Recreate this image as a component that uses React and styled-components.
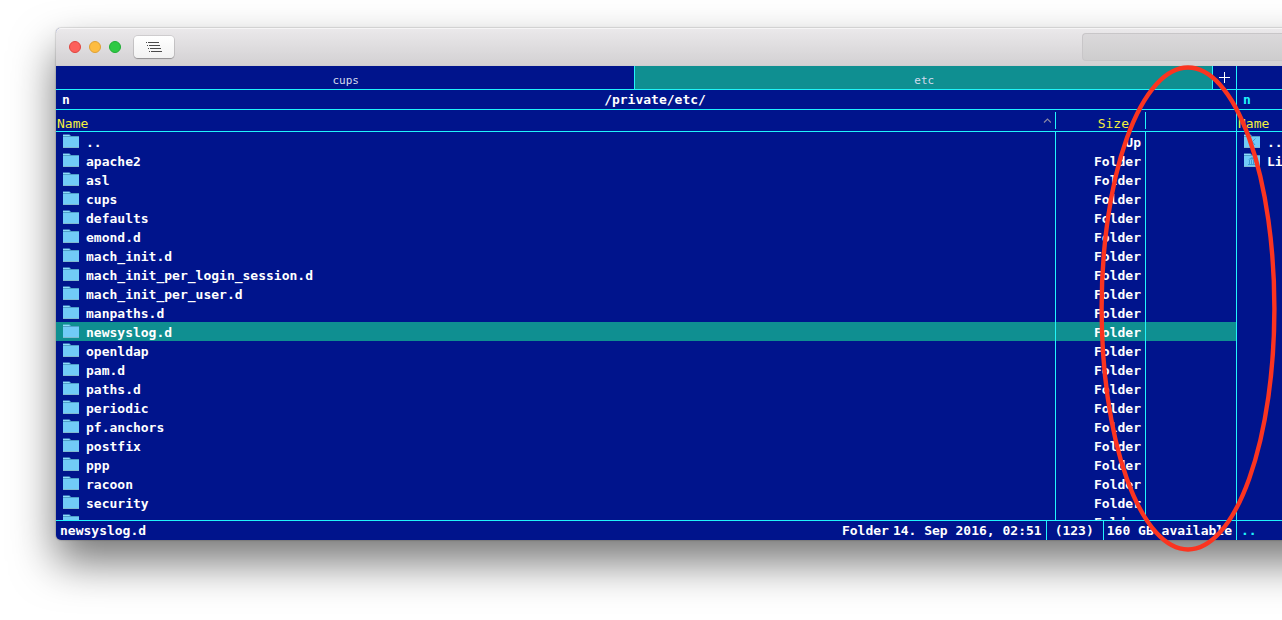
import React from "react";
import styled, { createGlobalStyle } from "styled-components";

const NAVY = "#00148c";
const CYAN = "#21f4fb";
const TEAL = "#0f8f91";
const YELLOW = "#f4f03c";

const GlobalStyle = createGlobalStyle`
  * {
    box-sizing: border-box;
  }

  body {
    margin: 0;
    background: #fff;
    overflow: hidden;
    font: 13px/17px "DejaVu Sans Mono", monospace;
    color: #fff;
  }

  button {
    margin: 0;
    padding: 0;
    border: 0;
    background: none;
    font: inherit;
    color: inherit;
  }
`

const Desktop = styled.main`
  position: relative;
  display: flex;
  height: 100vh;
  padding: 28px 0 80px 56px;
  overflow: hidden;
`

const Window = styled.section`
  flex: 1;
  display: flex;
  flex-direction: column;
  min-width: 0;
  margin-right: -80px;
  padding-right: 80px;
  border-radius: 5px;
  background: ${NAVY};
  box-shadow: 0 0 1px 1px rgba(0, 0, 0, 0.12), 0 22px 44px rgba(0, 0, 0, 0.54);
`

const TitleBar = styled.header`
  flex: none;
  display: flex;
  align-items: center;
  gap: 8px;
  height: 38px;
  margin-right: -80px;
  padding: 0 80px 0 13px;
  border-radius: 5px 5px 0 0;
  border-bottom: 1px solid #cfcdcf;
  background: linear-gradient(#ebe9eb, #d3d1d3);
  box-shadow: inset 0 1px 0 #f6f5f6;
`

const Light = styled.button`
  width: 12px;
  height: 12px;
  border: 1px solid ${(props) => props.$edge};
  border-radius: 50%;
  background: ${(props) => props.$fill};
`

const ViewButton = styled.button`
  display: flex;
  align-items: center;
  justify-content: center;
  width: 40px;
  height: 22px;
  margin-left: 5px;
  border-radius: 4px;
  background: linear-gradient(#fff, #f2f2f2);
  box-shadow: 0 0 0 1px rgba(0, 0, 0, 0.1), 0 1px 1px rgba(0, 0, 0, 0.25);
`

const ToolbarField = styled.div`
  width: 200px;
  height: 28px;
  margin: 0 0 0 auto;
  border: 1px solid #c8c6c8;
  border-right: 0;
  border-radius: 4px 0 0 4px;
  background: linear-gradient(#dbd9db, #cecdce);
`

const Panes = styled.div`
  flex: 1;
  display: flex;
  min-height: 0;
`

const Pane = styled.section`
  flex: ${(props) => (props.$side ? "none" : "1")};
  display: flex;
  flex-direction: column;
  width: ${(props) => (props.$side ? "45px" : "auto")};
  min-width: 0;
  overflow: hidden;
  border-right: ${(props) => (props.$side ? "0" : `1px solid ${CYAN}`)};
`

const TabBar = styled.div`
  flex: none;
  display: flex;
  height: 24px;
  border-bottom: 1px solid ${CYAN};
`

const Tab = styled.button`
  flex: 1;
  padding: 6px 0 0 2px;
  border-right: 1px solid ${CYAN};
  background: ${(props) => (props.$active ? TEAL : "transparent")};
  color: #d5dbee;
  font-size: 11px;
  line-height: 17px;
`

const AddTab = styled.button`
  display: flex;
  align-items: center;
  justify-content: center;
  width: 23px;
`

const PathBar = styled.div`
  flex: none;
  display: flex;
  height: 20px;
  padding: 1px 0 2px 6px;
  border-bottom: 1px solid ${CYAN};
  color: ${(props) => (props.$side ? CYAN : "#fff")};
  font-weight: bold;
`

const Drive = styled.span`
  width: 12px;
`

const Path = styled.span`
  flex: 1;
  text-align: center;
`

const Listing = styled.div`
  flex: 1;
  min-height: 0;
  overflow: hidden;
`

const FileTable = styled.table`
  width: 100%;
  table-layout: fixed;
  border-collapse: separate;
  border-spacing: 0;
`

const HeadCell = styled.th`
  width: ${(props) => props.$width || "auto"};
  height: 22px;
  padding: 0;
  border-bottom: 1px solid ${CYAN};
  color: ${YELLOW};
  font-weight: normal;
  text-align: left;
`

const HeadLabel = styled.div`
  display: flex;
  justify-content: ${(props) => (props.$end ? "flex-end" : "space-between")};
  height: 17px;
  padding: 3px ${(props) => (props.$end ? "16px" : "4px")} 0 1px;
  border-right: ${(props) => (props.$last ? "0" : `1px solid ${CYAN}`)};

  svg {
    margin-top: 3px;
  }
`

const FileRow = styled.tr`
  background: ${(props) => (props.$selected ? TEAL : "transparent")};
`

const Cell = styled.td`
  height: 19px;
  padding: 2px 4px 0 0;
  border-right: ${(props) => (props.$last ? "0" : `1px solid ${CYAN}`)};
  font-weight: bold;
  text-align: right;
  white-space: nowrap;
`

const NameCell = styled(Cell)`
  padding: 0 0 0 7px;
  text-align: left;
`

const FileName = styled.div`
  display: flex;
  gap: 7px;
  height: 19px;
  padding-top: 2px;

  svg {
    flex: none;
  }
`

const StatusBar = styled.footer`
  flex: none;
  display: flex;
  height: 20px;
  border-top: 1px solid ${CYAN};
  color: ${(props) => (props.$side ? CYAN : "#fff")};
  font-weight: bold;
  white-space: pre;
`

const StatusItem = styled.span`
  flex: ${(props) => (props.$grow ? "1" : "none")};
  padding: ${(props) => props.$pad || "1px 4px 0"};
  border-left: ${(props) => (props.$line ? `1px solid ${CYAN}` : "0")};
`

const Marker = styled.svg`
  position: absolute;
  top: 64px;
  right: 4px;
  width: 180px;
  height: calc(100% - 131px);
  overflow: visible;
  pointer-events: none;
`

const folders = [
  "apache2",
  "asl",
  "cups",
  "defaults",
  "emond.d",
  "mach_init.d",
  "mach_init_per_login_session.d",
  "mach_init_per_user.d",
  "manpaths.d",
  "newsyslog.d",
  "openldap",
  "pam.d",
  "paths.d",
  "periodic",
  "pf.anchors",
  "postfix",
  "ppp",
  "racoon",
  "security",
  "snmp",
];

const SELECTED = "newsyslog.d";

const FolderIcon = ({ badge }) => (
  <svg width="16" height="14" viewBox="0 0 16 14" aria-hidden="true">
    <path d="M0 14V.5h6.500L8 2h8v12z" fill="#6fc3e8" />
    <path d="M0 1h6v1H0z" fill="#8edcf8" />
    <path d="M0 2h16v1H0z" fill="#4f9fc8" />
    <path d="M0 3h16v10H0z" fill="#71cbf7" />
    <path d="M0 13h16v1H0z" fill="#7fb9d0" />
    {badge === "cross" && (
      <path d="M4.500 4.500l2 1L11 11M11.500 4.500l-3 3L5 11" stroke="#3c9bd4" fill="none" />
    )}
    {badge === "library" && (
      <>
        <path d="M4 6.500L8 4l4 2.500z" fill="#3c9bd4" />
        <path d="M5.500 7v4M7.500 7v4M9.500 7v4M11.500 7v4M4 11.500h8.500" stroke="#3c9bd4" fill="none" />
      </>
    )}
  </svg>
);

const ListIcon = () => (
  <svg width="16" height="10" viewBox="0 0 16 10" aria-hidden="true" shapeRendering="crispEdges">
    <path
      d="M0 .5h1M2 .5h11M1 3.500h1M3 3.500h11M2 6.500h1M4 6.500h11M3 9.500h1M5 9.500h11"
      stroke="#4a4a4a"
      fill="none"
    />
  </svg>
);

const PlusIcon = () => (
  <svg width="11" height="11" viewBox="0 0 11 11" aria-hidden="true">
    <path d="M5.500 0v11M0 5.500h11" stroke="#fff" />
  </svg>
);

const SortIcon = () => (
  <svg width="8" height="5" viewBox="0 0 8 5" aria-hidden="true">
    <path d="M1 4.500L4.500 1 8 4.500" stroke="#8a88a4" strokeWidth="1.200" fill="none" />
  </svg>
);

const MainPane = () => (
  <Pane>
    <TabBar role="tablist">
      <Tab role="tab" aria-selected="false">cups</Tab>
      <Tab role="tab" aria-selected="true" $active>etc</Tab>
      <AddTab aria-label="New tab"><PlusIcon /></AddTab>
    </TabBar>
    <PathBar>
      <Drive>n</Drive>
      <Path>/private/etc/</Path>
    </PathBar>
    <Listing>
      <FileTable>
        <thead>
          <tr>
            <HeadCell><HeadLabel>Name<SortIcon /></HeadLabel></HeadCell>
            <HeadCell $width="90px"><HeadLabel $end>Size</HeadLabel></HeadCell>
            <HeadCell $width="90px" aria-label="Details" />
          </tr>
        </thead>
        <tbody>
          <FileRow>
            <NameCell><FileName><FolderIcon />..</FileName></NameCell>
            <Cell>Up</Cell>
            <Cell $last />
          </FileRow>
          {folders.map((name) => (
            <FileRow key={name} $selected={name === SELECTED}>
              <NameCell><FileName><FolderIcon />{name}</FileName></NameCell>
              <Cell>Folder</Cell>
              <Cell $last />
            </FileRow>
          ))}
        </tbody>
      </FileTable>
    </Listing>
    <StatusBar>
      <StatusItem $grow>{SELECTED}</StatusItem>
      <StatusItem $pad="1px 0 0">Folder</StatusItem>
      <StatusItem>14. Sep 2016, 02:51</StatusItem>
      <StatusItem $line $pad="1px 9px 0 8px">(123)</StatusItem>
      <StatusItem $line $pad="1px 4px 0 3px">160 GB available</StatusItem>
    </StatusBar>
  </Pane>
);

const SidePane = () => (
  <Pane $side>
    <TabBar />
    <PathBar $side>
      <Drive>n</Drive>
    </PathBar>
    <Listing>
      <FileTable>
        <thead>
          <tr>
            <HeadCell><HeadLabel $last>Name</HeadLabel></HeadCell>
          </tr>
        </thead>
        <tbody>
          <FileRow>
            <NameCell $last><FileName><FolderIcon badge="cross" />..</FileName></NameCell>
          </FileRow>
          <FileRow>
            <NameCell $last><FileName><FolderIcon badge="library" />Li</FileName></NameCell>
          </FileRow>
        </tbody>
      </FileTable>
    </Listing>
    <StatusBar $side>
      <StatusItem>..</StatusItem>
    </StatusBar>
  </Pane>
);

const App = () => {
  return (
    <Desktop>
      <GlobalStyle />
      <Window>
        <TitleBar>
          <Light $fill="#fc605b" $edge="#e0443e" aria-label="Close" />
          <Light $fill="#fdbc40" $edge="#dea034" aria-label="Minimize" />
          <Light $fill="#2fc944" $edge="#1fad34" aria-label="Zoom" />
          <ViewButton aria-label="List view"><ListIcon /></ViewButton>
          <ToolbarField />
        </TitleBar>
        <Panes>
          <MainPane />
          <SidePane />
        </Panes>
      </Window>
      <Marker aria-hidden="true">
        <ellipse cx="50%" cy="50%" rx="48%" ry="241" fill="none" stroke="#fb3420" strokeWidth="4.400" />
      </Marker>
    </Desktop>
  );
}

export default App;
